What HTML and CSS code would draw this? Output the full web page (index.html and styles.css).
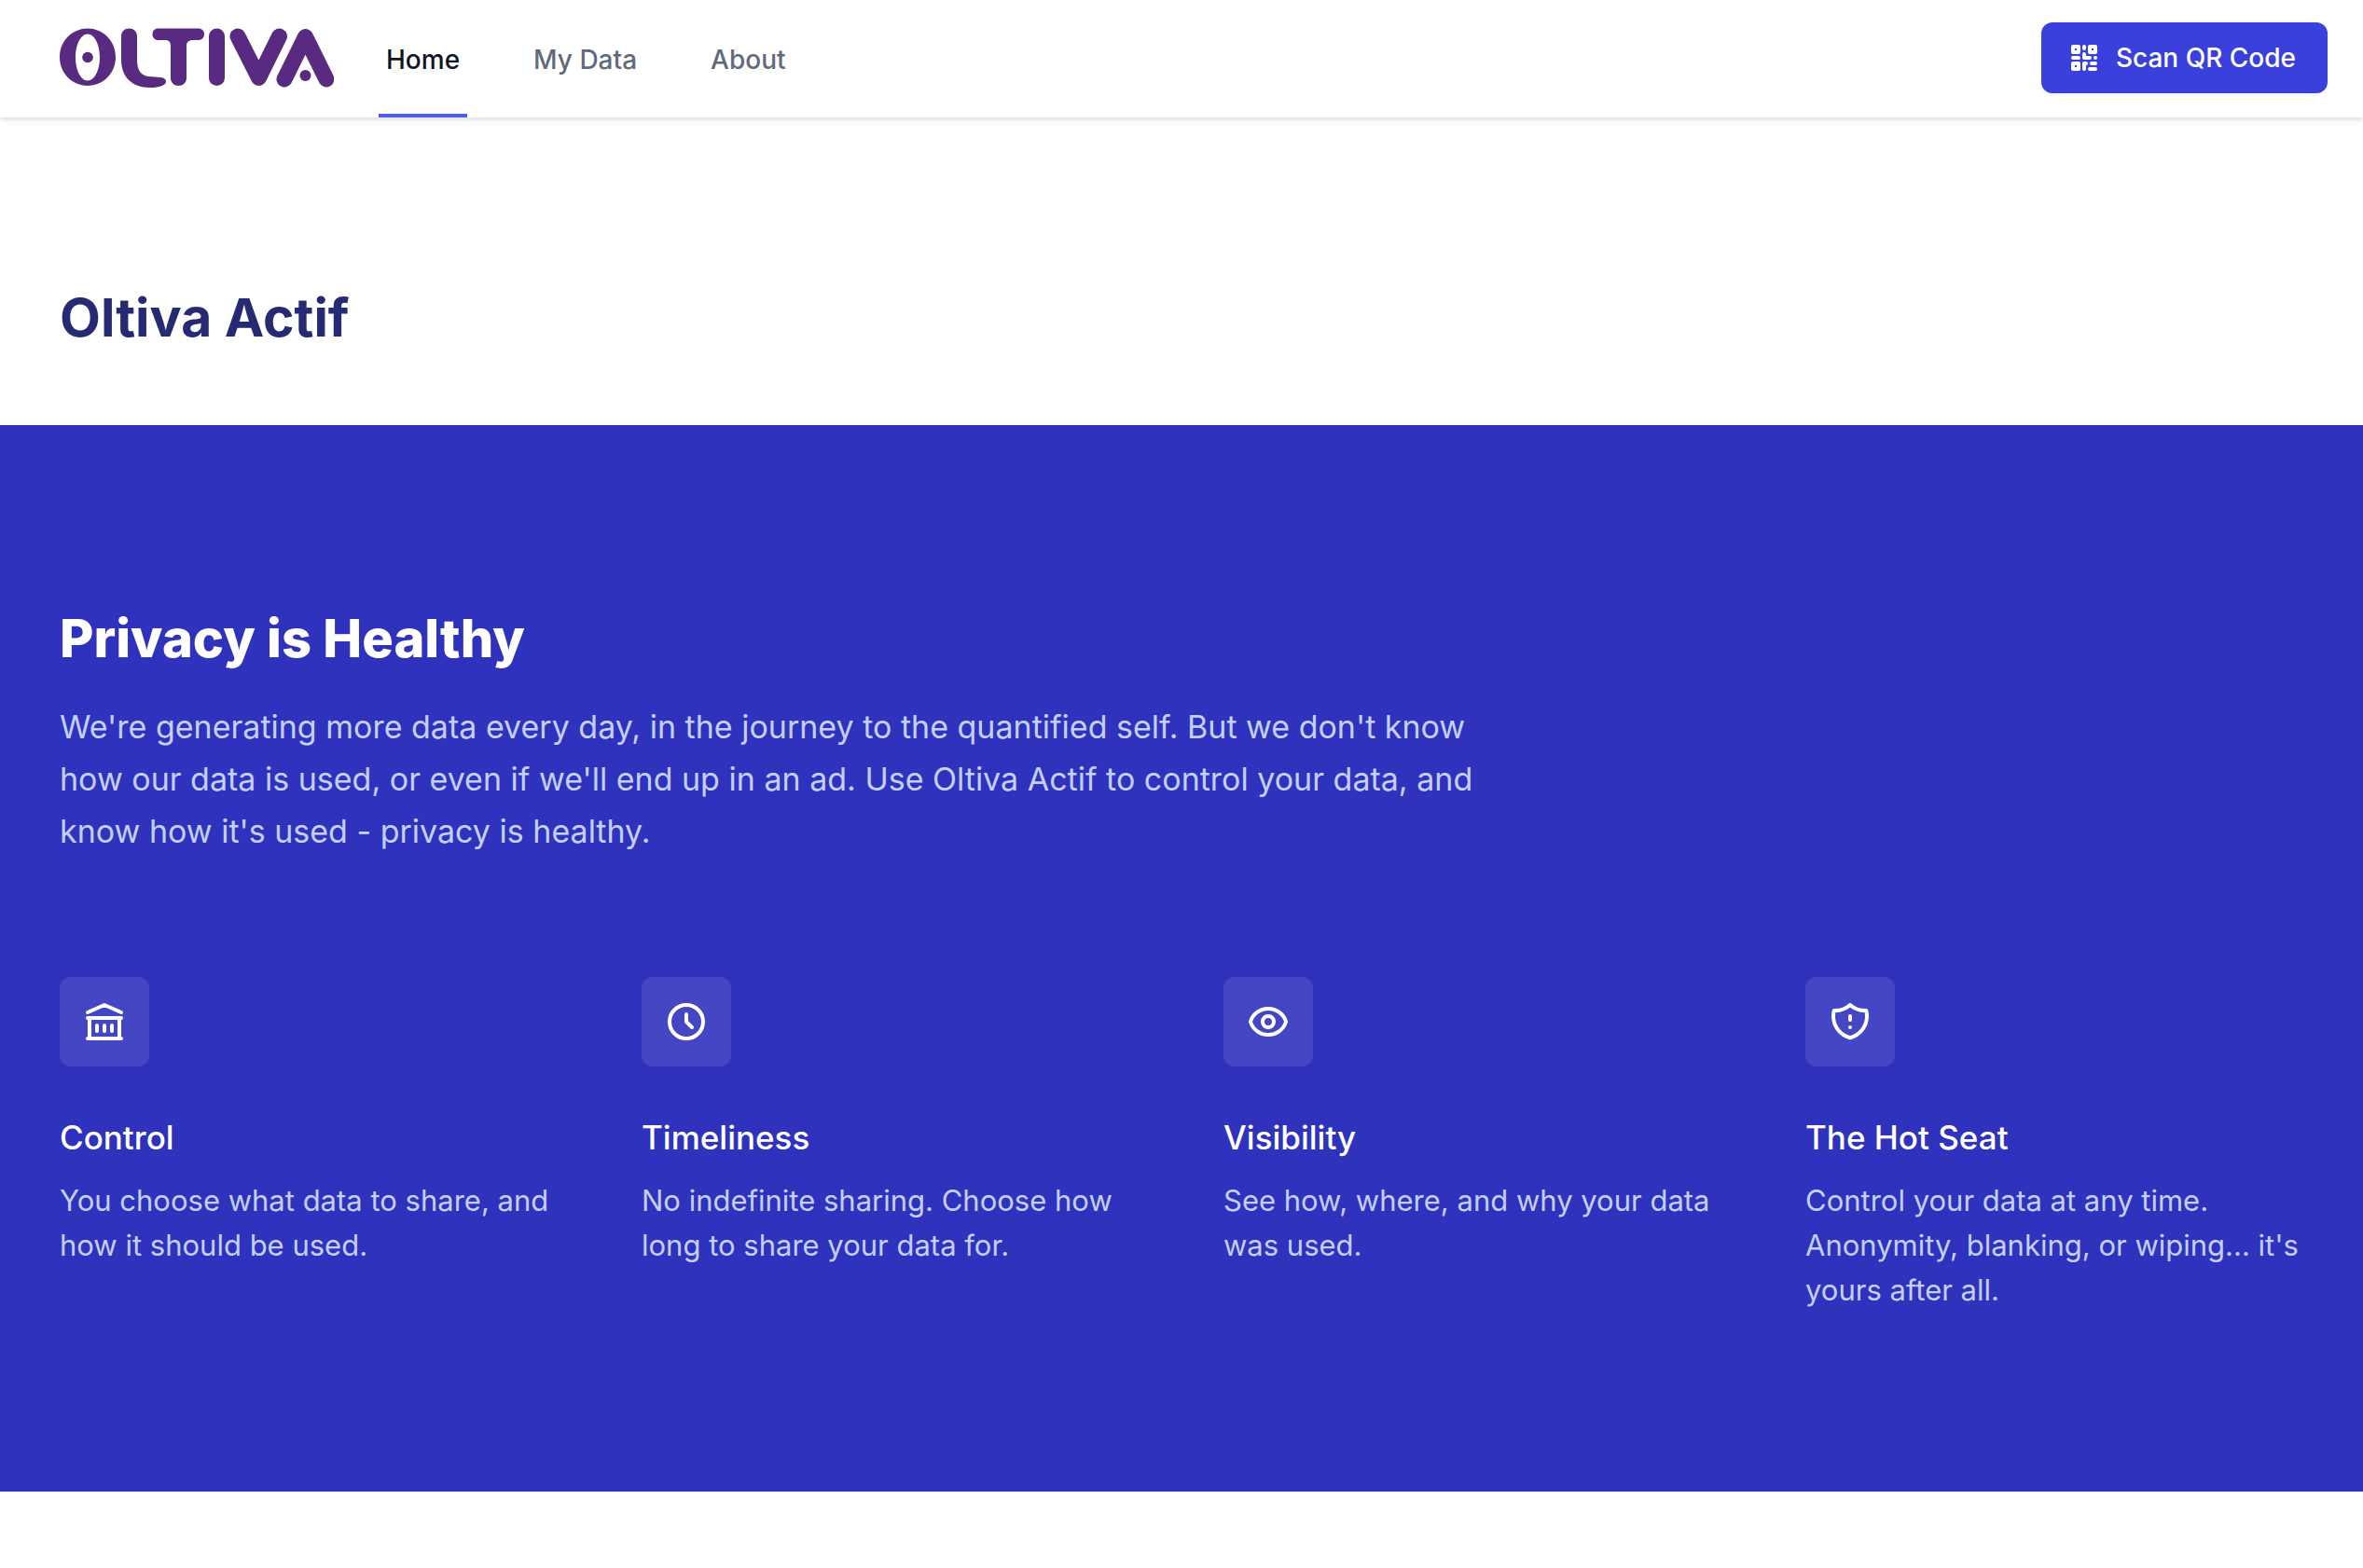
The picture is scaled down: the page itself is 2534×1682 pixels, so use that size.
FILE: index.html
```html
<!DOCTYPE html>
<html lang="en">
<head>
<meta charset="utf-8">
<meta name="viewport" content="width=device-width, initial-scale=1">
<title>Oltiva Actif</title>
<link rel="stylesheet" href="styles.css">
</head>
<body>
<header class="topbar">
  <a class="brand" href="#" aria-label="Oltiva">
    <svg class="logo" viewBox="0 0 294 64" fill="none" aria-hidden="true">
      <path fill="currentColor" fill-rule="evenodd" d="M30 .5C46.800.5 60 14.200 60 31.300S46.800 62 30 62 0 48.400 0 31.300 13.200.5 30 .5zM30 6.500c-7.300 0-13 11-13 25s5.700 25 13 25 13-11 13-25-5.700-25-13-25z"/>
      <circle cx="30" cy="31.500" r="5.800" fill="currentColor"/>
      <path fill="currentColor" d="M66 9C66 3.500 70 .5 74.500.5S83 3.500 83 9V34C83 47 88 52 99 52.300L108 53C112 53.300 114 55 114 57.500C114 61.500 107 64 97 64C77 64 66 52 66 34Z"/>
      <path fill="currentColor" d="M105.500.5H148.500C152.500.5 155 3 155 6.700S152.500 13 148.500 13H143C138 13 136 15 136 20V53.500C136 59 132 62 127.500 62S119 59 119 53.500V20C119 15 117.500 13 113 13H105.500C102 13 99.500 10.400 99.500 6.700S102 .5 105.500.5Z"/>
      <rect x="160" y=".5" width="17" height="61.500" rx="8.500" fill="currentColor"/>
      <path d="M191 9L213.500 53.500L235.500 9" stroke="currentColor" stroke-width="17" stroke-linecap="round" stroke-linejoin="round"/>
      <path d="M241 55L263.500 9.500L286 55" stroke="currentColor" stroke-width="17" stroke-linecap="round" stroke-linejoin="round"/>
      <circle cx="263.500" cy="51" r="6" fill="currentColor"/>
    </svg>
  </a>
  <nav class="nav" aria-label="Main">
    <a class="nav-link nav-link-active" href="#" aria-current="page">Home</a>
    <a class="nav-link" href="#">My Data</a>
    <a class="nav-link" href="#">About</a>
  </nav>
  <button class="scan" type="button">
    <svg class="scan-icon" viewBox="0 0 20 20" fill="currentColor" aria-hidden="true">
      <path fill-rule="evenodd" clip-rule="evenodd" d="M3 4a1 1 0 011-1h3a1 1 0 011 1v3a1 1 0 01-1 1H4a1 1 0 01-1-1V4zm2 2V5h1v1H5zM3 13a1 1 0 011-1h3a1 1 0 011 1v3a1 1 0 01-1 1H4a1 1 0 01-1-1v-3zm2 2v-1h1v1H5zM13 3a1 1 0 00-1 1v3a1 1 0 001 1h3a1 1 0 001-1V4a1 1 0 00-1-1h-3zm1 2v1h1V5h-1z"/>
      <path d="M11 4a1 1 0 10-2 0v1a1 1 0 002 0V4zM10 7a1 1 0 011 1v1h2a1 1 0 110 2h-3a1 1 0 01-1-1V8a1 1 0 011-1zM16 9a1 1 0 100 2 1 1 0 000-2zM9 13a1 1 0 011-1h1a1 1 0 110 2v2a1 1 0 11-2 0v-3zM7 11a1 1 0 100-2H4a1 1 0 100 2h3zM17 13a1 1 0 01-1 1h-2a1 1 0 110-2h2a1 1 0 011 1zM16 17a1 1 0 100-2h-3a1 1 0 100 2h3z"/>
    </svg>
    Scan QR Code
  </button>
</header>
<main>
  <div class="hero">
    <h1 class="hero-title">Oltiva Actif</h1>
  </div>
  <section class="privacy">
    <h2 class="privacy-title">Privacy is Healthy</h2>
    <p class="privacy-lead">We're generating more data every day, in the journey to the quantified self. But we don't know how our data is used, or even if we'll end up in an ad. Use Oltiva Actif to control your data, and know how it's used - privacy is healthy.</p>
    <div class="features">
      <article class="feature">
        <span class="tile"><svg class="tile-icon" viewBox="0 0 24 24" aria-hidden="true"><path d="M8 14v3m4-3v3m4-3v3M3 21h18M3 10h18M3 7l9-4 9 4M4 10h16v11H4V10z"/></svg></span>
        <h3 class="feature-title">Control</h3>
        <p class="feature-text">You choose what data to share, and how it should be used.</p>
      </article>
      <article class="feature">
        <span class="tile"><svg class="tile-icon" viewBox="0 0 24 24" aria-hidden="true"><path d="M12 8v4l3 3m6-3a9 9 0 11-18 0 9 9 0 0118 0z"/></svg></span>
        <h3 class="feature-title">Timeliness</h3>
        <p class="feature-text">No indefinite sharing. Choose how long to share your data for.</p>
      </article>
      <article class="feature">
        <span class="tile"><svg class="tile-icon" viewBox="0 0 24 24" aria-hidden="true"><path d="M15 12a3 3 0 11-6 0 3 3 0 016 0z"/><path d="M2.458 12C3.732 7.943 7.523 5 12 5c4.478 0 8.268 2.943 9.542 7-1.274 4.057-5.064 7-9.542 7-4.477 0-8.268-2.943-9.542-7z"/></svg></span>
        <h3 class="feature-title">Visibility</h3>
        <p class="feature-text">See how, where, and why your data was used.</p>
      </article>
      <article class="feature">
        <span class="tile"><svg class="tile-icon" viewBox="0 0 24 24" aria-hidden="true"><path d="M20.618 5.984A11.955 11.955 0 0112 2.944a11.955 11.955 0 01-8.618 3.040A12.020 12.020 0 003 9c0 5.591 3.824 10.290 9 11.622 5.176-1.332 9-6.030 9-11.622 0-1.042-.133-2.052-.382-3.016zM12 9v2m0 4h.010"/></svg></span>
        <h3 class="feature-title">The Hot Seat</h3>
        <p class="feature-text">Control your data at any time. Anonymity, blanking, or wiping... it's yours after all.</p>
      </article>
    </div>
  </section>
</main>
</body>
</html>
```
FILE: styles.css
```css
* {
  box-sizing: border-box;
}

body,
h1,
h2,
h3,
p {
  margin: 0;
}

body {
  background: #fff;
  font-family: Inter, "Liberation Sans", sans-serif;
}

.topbar {
  position: relative;
  display: flex;
  align-items: flex-start;
  padding: 0 38px 0 64px;
  background: #fff;
  box-shadow: 0 2px 6px rgba(0, 0, 0, 0.1), 0 2px 4px rgba(0, 0, 0, 0.06);
}

.brand {
  margin-top: 30px;
  color: #582a80;
}

.logo {
  display: block;
  width: 294px;
  height: 64px;
}

.nav {
  display: flex;
  gap: 63px;
  margin-left: 48px;
}

.nav-link {
  padding: 44px 8px 38px;
  border-bottom: 4px solid transparent;
  color: #626a79;
  font-size: 28px;
  font-weight: 500;
  line-height: 40px;
  text-decoration: none;
}

.nav-link-active {
  border-color: #4f5de8;
  color: #0f1523;
}

.scan {
  display: flex;
  align-items: center;
  gap: 14px;
  margin: 24px 0 0 auto;
  padding: 18px 34px 18px 26px;
  border: 0;
  border-radius: 12px;
  background: #3940db;
  box-shadow: 0 2px 4px rgba(0, 0, 0, 0.05);
  color: #fff;
  font: inherit;
  font-size: 28px;
  font-weight: 500;
  line-height: 40px;
}

.scan-icon {
  width: 40px;
  height: 40px;
}

.hero {
  padding: 179px 64px 79px;
}

.hero-title {
  color: #262a73;
  font-size: 57px;
  font-weight: 700;
  line-height: 72px;
}

.privacy {
  padding: 193px 64px 192px;
  background: #2f32bd;
}

.privacy-title {
  color: #fff;
  font-size: 56px;
  font-weight: 800;
  line-height: 72px;
}

.privacy-lead {
  max-width: 1536px;
  margin-top: 31px;
  color: #c3d0fb;
  font-size: 34px;
  line-height: 56px;
}

.features {
  display: grid;
  grid-template-columns: repeat(4, 1fr);
  gap: 90px;
  margin-top: 128px;
}

.tile {
  display: flex;
  align-items: center;
  justify-content: center;
  width: 96px;
  height: 96px;
  border-radius: 12px;
  background: rgba(255, 255, 255, 0.1);
}

.tile-icon {
  width: 48px;
  height: 48px;
  fill: none;
  stroke: #fff;
  stroke-width: 2;
  stroke-linecap: round;
  stroke-linejoin: round;
}

.feature-title {
  margin-top: 48px;
  color: #fff;
  font-size: 35px;
  font-weight: 500;
  line-height: 56px;
}

.feature-text {
  margin-top: 16px;
  color: #c3d0fb;
  font-size: 31px;
  line-height: 48px;
}
```
